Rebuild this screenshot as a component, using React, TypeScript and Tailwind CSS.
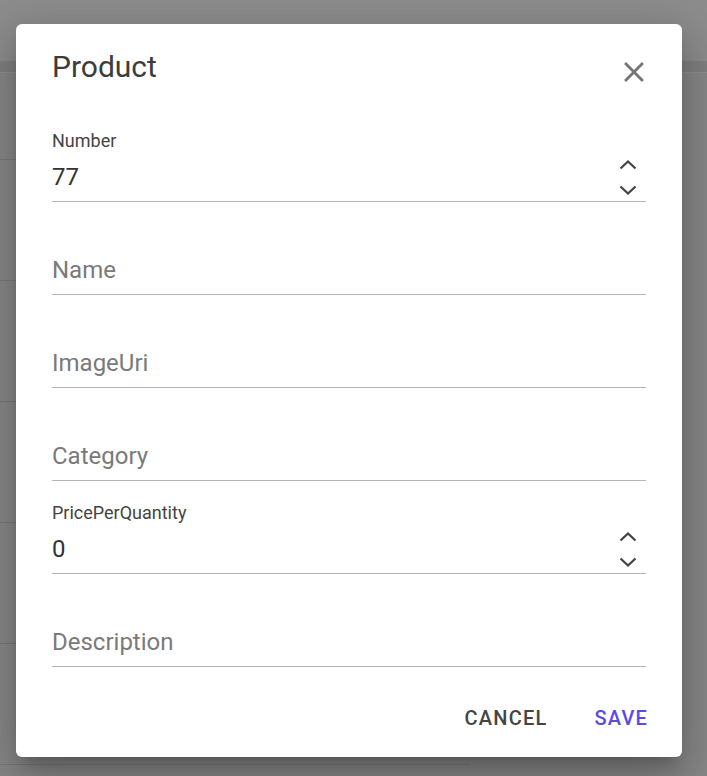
import React from "react";

type Field = { label: string; value?: string; numeric?: boolean };

const fields: Field[] = [
  { label: "Number", value: "77", numeric: true },
  { label: "Name" },
  { label: "ImageUri" },
  { label: "Category" },
  { label: "PricePerQuantity", value: "0", numeric: true },
  { label: "Description" },
];

function Spinner() {
  return (
    <div className="mt-[-2px] flex shrink-0 flex-col items-center gap-[13px] pr-[8px]">
      <svg width="20" height="12" viewBox="0 0 20 12" fill="none" className="shrink-0">
        <path d="M2.5 9.5 L10 2.5 L17.5 9.5" stroke="#444" strokeWidth="2.3" />
      </svg>
      <svg width="20" height="12" viewBox="0 0 20 12" fill="none" className="shrink-0">
        <path d="M2.5 2.5 L10 9.5 L17.5 2.5" stroke="#444" strokeWidth="2.3" />
      </svg>
    </div>
  );
}

function FormField({ field }: { field: Field }) {
  const filled = field.value !== undefined;
  return (
    <div className="flex flex-col">
      <div className="h-[24px] text-[18px] leading-[24px] text-[#444]">{filled ? field.label : ""}</div>
      <div className="mt-[8px] flex h-[41px] items-start justify-between border-b border-[#b5b5b5]">
        <span className={`h-[32px] text-[24px] leading-[32px] ${filled ? "text-[#333]" : "text-[#7a7a7a]"}`}>
          {filled ? field.value : field.label}
        </span>
        {field.numeric && <Spinner />}
      </div>
    </div>
  );
}

export default function App() {
  return (
    <div className="relative h-[776px] w-[707px] overflow-hidden bg-[#878787] font-['Roboto',sans-serif]">
      {/* dimmed page behind */}
      <div className="h-[61px] bg-[#8c8c8c]" />
      <div className="h-[12px] border-b border-[#8e8e8e] bg-[#7f7f7f]" />
      <div className="flex w-[470px] flex-col pt-[86px]">
        {[0, 1, 2, 3, 4, 5].map((i) => (
          <div key={i} className="h-[121px] border-t border-[#7a7a7a]" />
        ))}
      </div>

      {/* dialog */}
      <div className="absolute left-[16px] top-[24px] flex h-[733px] w-[666px] flex-col rounded-[6px] bg-white px-[36px] pt-[25px] shadow-[0_11px_15px_-7px_rgba(0,0,0,0.2),0_24px_38px_3px_rgba(0,0,0,0.14),0_9px_46px_8px_rgba(0,0,0,0.12)]">
        <div className="flex items-start justify-between">
          <h2 className="text-[30px] leading-[36px] text-[#3c3c3c]">Product</h2>
          <svg width="34" height="34" viewBox="0 0 24 24" className="mr-[-5px] mt-[6px]" fill="#757575">
            <path d="M19 6.41 17.59 5 12 10.59 6.41 5 5 6.41 10.59 12 5 17.59 6.41 19 12 13.41 17.59 19 19 17.59 13.41 12z" />
          </svg>
        </div>
        <div className="mt-[40px] flex flex-col gap-[20px]">
          {fields.map((f) => (
            <FormField key={f.label} field={f} />
          ))}
        </div>
        <div className="mt-[39px] flex justify-end gap-[47px]">
          <button className="text-[20px] font-medium leading-[24px] tracking-[1.2px] text-[#444]">CANCEL</button>
          <button className="mr-[-2px] text-[20px] font-medium leading-[24px] tracking-[1.2px] text-[#5b4be6]">SAVE</button>
        </div>
      </div>
    </div>
  );
}
